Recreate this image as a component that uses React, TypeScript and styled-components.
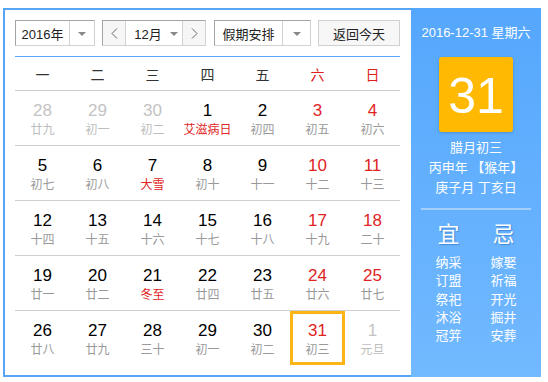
import React from "react";
import styled, { createGlobalStyle } from "styled-components";

const Global = createGlobalStyle`
  html, body { margin: 0; padding: 0; background: #fff; }
  body { font-family: "Liberation Sans", "Noto Sans CJK SC", sans-serif; }
`;

const Page = styled.div`
  padding: 8px 0 0 3px;
`;

const Frame = styled.div`
  display: flex;
  width: 538px;
  height: 369px;
`;

const Main = styled.div`
  box-sizing: border-box;
  width: 408px;
  height: 369px;
  border: 2px solid #57a5f5;
  border-right: none;
  padding: 10px 11px 10px 10px;
  display: flex;
  flex-direction: column;
`;

const Toolbar = styled.div`
  display: flex;
  height: 26px;
  margin-bottom: 10px;
`;

const Group = styled.div<{ $w: number; $ml?: number }>`
  box-sizing: border-box;
  display: flex;
  width: ${(p) => p.$w}px;
  height: 26px;
  margin-left: ${(p) => p.$ml ?? 0}px;
  border: 1px solid;
  border-color: #a5a5a5 #d2d2d2 #d2d2d2 #a5a5a5;
  background: #fff;
`;

const Label = styled.div`
  flex: 1;
  display: flex;
  align-items: center;
  justify-content: center;
  font-size: 13px;
  color: #222;
`;

const Drop = styled.div<{ $w: number }>`
  width: ${(p) => p.$w}px;
  border-left: 1px solid #d2d2d2;
  display: flex;
  align-items: center;
  justify-content: center;
`;

const Tri = styled.span`
  width: 0;
  height: 0;
  border-left: 4px solid transparent;
  border-right: 4px solid transparent;
  border-top: 4px solid #888;
  margin-top: 1px;
`;

const Step = styled.div<{ $side: "l" | "r" }>`
  width: 22px;
  background: #f6f6f6;
  display: flex;
  align-items: center;
  justify-content: center;
  ${(p) => (p.$side === "l" ? "border-right: 1px solid #d2d2d2;" : "border-left: 1px solid #d2d2d2;")}
`;

const MonthLabel = styled.div`
  flex: 1;
  display: flex;
  align-items: center;
  justify-content: center;
  gap: 8px;
  font-size: 13px;
  color: #222;
  padding-left: 4px;
`;

const TodayBtn = styled.div`
  box-sizing: border-box;
  width: 82px;
  height: 26px;
  margin-left: 7px;
  border: 1px solid #d0d0d0;
  background: #f7f7f7;
  display: flex;
  align-items: center;
  justify-content: center;
  font-size: 13px;
  color: #222;
`;

const Grid = styled.div`
  display: grid;
  grid-template-columns: repeat(7, 55px);
  border-top: 1px solid #5aa8f5;
`;

const Head = styled.div<{ $red?: boolean }>`
  height: 33px;
  display: flex;
  align-items: center;
  justify-content: center;
  font-size: 14px;
  color: ${(p) => (p.$red ? "#e02020" : "#333")};
`;

const Cell = styled.div`
  box-sizing: border-box;
  height: 55px;
  border-top: 1px solid #cfcfcf;
  position: relative;
  display: flex;
  flex-direction: column;
  align-items: center;
  padding-top: 10px;
`;

const SelBox = styled.div`
  position: absolute;
  left: 0;
  top: 0;
  right: 0;
  bottom: 0;
  border: 3px solid #fdb515;
`;

const Num = styled.div<{ $c: string }>`
  font-size: 17px;
  line-height: 20px;
  color: ${(p) => p.$c};
`;

const Lunar = styled.div<{ $c: string }>`
  font-size: 12px;
  line-height: 18px;
  color: ${(p) => p.$c};
`;

const Side = styled.div`
  width: 130px;
  height: 369px;
  background: linear-gradient(#55a7fd, #72b9ff);
  display: flex;
  flex-direction: column;
  align-items: center;
  color: #fff;
`;

const DateLine = styled.div`
  margin-top: 17px;
  font-size: 13px;
  line-height: 16px;
  white-space: nowrap;
`;

const BigDay = styled.div`
  margin-top: 16px;
  width: 74px;
  height: 75px;
  border-radius: 3px;
  background: #ffb900;
  box-shadow: 0 1px 3px rgba(0, 0, 0, 0.18);
  display: flex;
  align-items: center;
  justify-content: center;
  font-size: 50px;
  line-height: 1;
  color: #fff;
  padding-top: 2px;
  box-sizing: border-box;
`;

const LunarInfo = styled.div`
  margin-top: 6px;
  font-size: 13px;
  line-height: 20px;
  text-align: center;
  white-space: nowrap;
`;

const Sep = styled.div`
  margin-top: 10px;
  width: 110px;
  height: 2px;
  background: rgba(255, 255, 255, 0.4);
`;

const YiJi = styled.div`
  margin-top: 12px;
  display: grid;
  grid-template-columns: 55px 55px;
`;

const Col = styled.div`
  display: flex;
  flex-direction: column;
  align-items: center;
`;

const Big = styled.div`
  font-size: 22px;
  line-height: 26px;
  font-weight: normal;
  text-shadow: 1px 1px 1px rgba(0, 60, 140, 0.35);
  margin-bottom: 6px;
`;

const Item = styled.div`
  font-size: 13px;
  line-height: 18.3px;
`;

const Chevron = ({ dir }: { dir: "l" | "r" }) => (
  <svg width="7" height="11" viewBox="0 0 7 11">
    <polyline
      points={dir === "l" ? "6,0.5 1,5.5 6,10.5" : "1,0.5 6,5.5 1,10.5"}
      fill="none"
      stroke="#666"
      strokeWidth="1"
    />
  </svg>
);

type D = { n: number; l: string; other?: boolean; fest?: boolean; sel?: boolean };

const days: D[] = [
  { n: 28, l: "廿九", other: true },
  { n: 29, l: "初一", other: true },
  { n: 30, l: "初二", other: true },
  { n: 1, l: "艾滋病日", fest: true },
  { n: 2, l: "初四" },
  { n: 3, l: "初五" },
  { n: 4, l: "初六" },
  { n: 5, l: "初七" },
  { n: 6, l: "初八" },
  { n: 7, l: "大雪", fest: true },
  { n: 8, l: "初十" },
  { n: 9, l: "十一" },
  { n: 10, l: "十二" },
  { n: 11, l: "十三" },
  { n: 12, l: "十四" },
  { n: 13, l: "十五" },
  { n: 14, l: "十六" },
  { n: 15, l: "十七" },
  { n: 16, l: "十八" },
  { n: 17, l: "十九" },
  { n: 18, l: "二十" },
  { n: 19, l: "廿一" },
  { n: 20, l: "廿二" },
  { n: 21, l: "冬至", fest: true },
  { n: 22, l: "廿四" },
  { n: 23, l: "廿五" },
  { n: 24, l: "廿六" },
  { n: 25, l: "廿七" },
  { n: 26, l: "廿八" },
  { n: 27, l: "廿九" },
  { n: 28, l: "三十" },
  { n: 29, l: "初一" },
  { n: 30, l: "初二" },
  { n: 31, l: "初三", sel: true },
  { n: 1, l: "元旦", other: true },
];

const weekdays = ["一", "二", "三", "四", "五", "六", "日"];
const yi = ["纳采", "订盟", "祭祀", "沐浴", "冠笄"];
const ji = ["嫁娶", "祈福", "开光", "掘井", "安葬"];

export default function App() {
  return (
    <>
      <Global />
      <Page>
        <Frame>
          <Main>
            <Toolbar>
              <Group $w={80}>
                <Label>2016年</Label>
                <Drop $w={24}>
                  <Tri />
                </Drop>
              </Group>
              <Group $w={104} $ml={7}>
                <Step $side="l">
                  <Chevron dir="l" />
                </Step>
                <MonthLabel>
                  <span>12月</span>
                  <Tri />
                </MonthLabel>
                <Step $side="r">
                  <Chevron dir="r" />
                </Step>
              </Group>
              <Group $w={97} $ml={8}>
                <Label>假期安排</Label>
                <Drop $w={27}>
                  <Tri />
                </Drop>
              </Group>
              <TodayBtn>返回今天</TodayBtn>
            </Toolbar>
            <Grid>
              {weekdays.map((w, i) => (
                <Head key={w} $red={i >= 5}>
                  {w}
                </Head>
              ))}
              {days.map((d, i) => {
                const weekend = i % 7 >= 5;
                const numColor = d.other ? "#c3c3c3" : weekend ? "#e02424" : "#000";
                const lunarColor = d.other ? "#bdbdbd" : d.fest ? "#e02424" : "#999";
                return (
                  <Cell key={i}>
                    {d.sel && <SelBox />}
                    <Num $c={numColor}>{d.n}</Num>
                    <Lunar $c={lunarColor}>{d.l}</Lunar>
                  </Cell>
                );
              })}
            </Grid>
          </Main>
          <Side>
            <DateLine>2016-12-31 星期六</DateLine>
            <BigDay>31</BigDay>
            <LunarInfo>
              腊月初三
              <br />
              丙申年 【猴年】
              <br />
              庚子月 丁亥日
            </LunarInfo>
            <Sep />
            <YiJi>
              <Col>
                <Big>宜</Big>
                {yi.map((t) => (
                  <Item key={t}>{t}</Item>
                ))}
              </Col>
              <Col>
                <Big>忌</Big>
                {ji.map((t) => (
                  <Item key={t}>{t}</Item>
                ))}
              </Col>
            </YiJi>
          </Side>
        </Frame>
      </Page>
    </>
  );
}
